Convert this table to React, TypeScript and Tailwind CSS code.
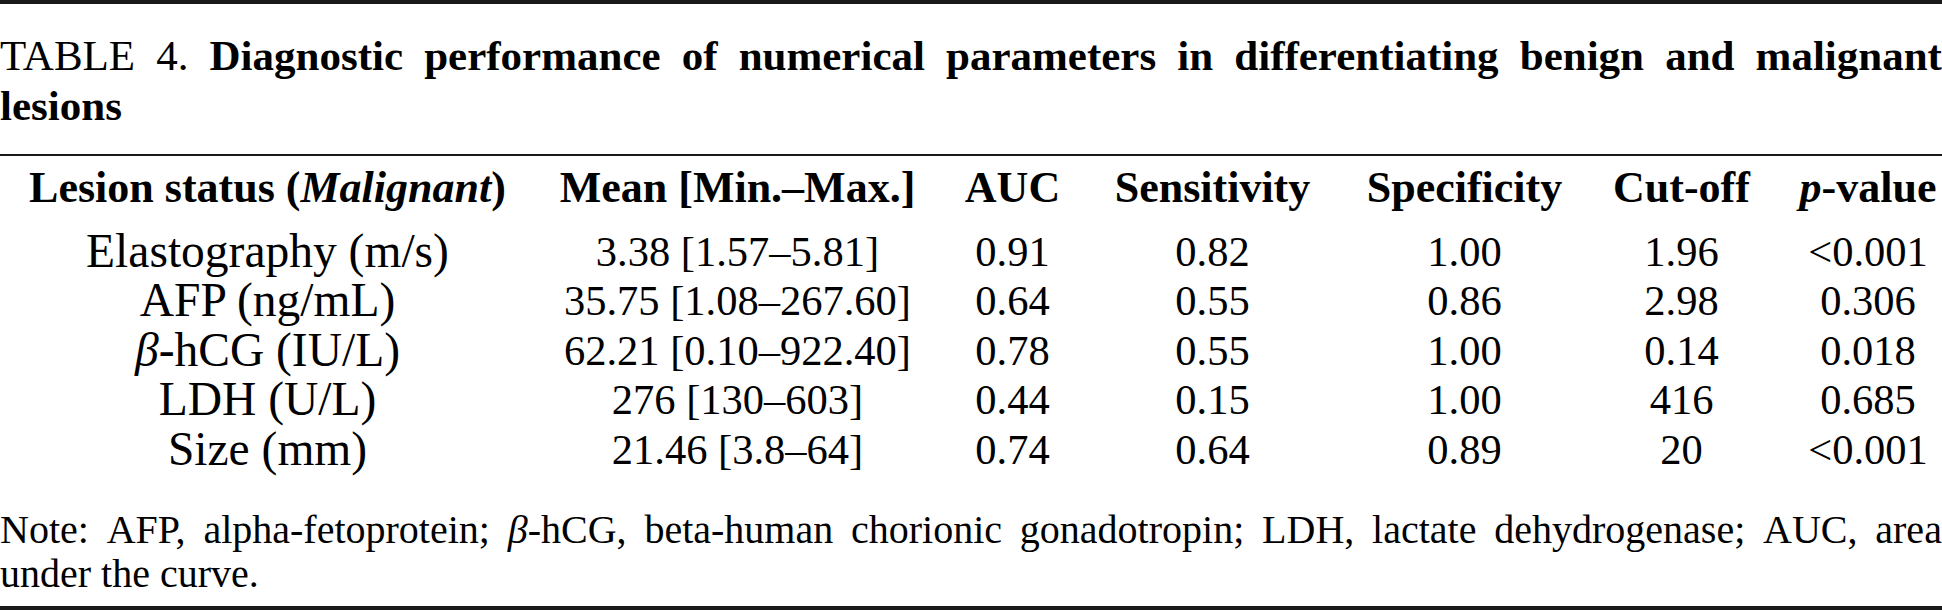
import React from "react";

const serif = { fontFamily: '"Liberation Serif", "Times New Roman", serif' };

const titleWords: { t: React.ReactNode; b: boolean }[] = [
  { t: "TABLE", b: false },
  { t: "4.", b: false },
  { t: "Diagnostic", b: true },
  { t: "performance", b: true },
  { t: "of", b: true },
  { t: "numerical", b: true },
  { t: "parameters", b: true },
  { t: "in", b: true },
  { t: "differentiating", b: true },
  { t: "benign", b: true },
  { t: "and", b: true },
  { t: "malignant", b: true },
];

const noteWords: React.ReactNode[] = [
  "Note:",
  "AFP,",
  "alpha-fetoprotein;",
  <span key="b">
    <i>β</i>-hCG,
  </span>,
  "beta-human",
  "chorionic",
  "gonadotropin;",
  "LDH,",
  "lactate",
  "dehydrogenase;",
  "AUC,",
  "area",
];

const rows: React.ReactNode[][] = [
  ["Elastography (m/s)", "3.38 [1.57–5.81]", "0.91", "0.82", "1.00", "1.96", "<0.001"],
  ["AFP (ng/mL)", "35.75 [1.08–267.60]", "0.64", "0.55", "0.86", "2.98", "0.306"],
  [
    <span key="b">
      <i>β</i>-hCG (IU/L)
    </span>,
    "62.21 [0.10–922.40]",
    "0.78",
    "0.55",
    "1.00",
    "0.14",
    "0.018",
  ],
  ["LDH (U/L)", "276 [130–603]", "0.44", "0.15", "1.00", "416", "0.685"],
  ["Size (mm)", "21.46 [3.8–64]", "0.74", "0.64", "0.89", "20", "<0.001"],
];

const gridCols =
  "grid grid-cols-[535px_405px_145px_255px_249px_185px_168px]";

export default function App() {
  return (
    <div
      className="w-[1942px] h-[610px] bg-white text-black overflow-hidden flex flex-col"
      style={serif}
    >
      <div className="h-[4px] bg-[#1a1a1a]" />
      <div className="mt-[27px] text-[43px] leading-[50px]">
        <div className="flex justify-between whitespace-nowrap">
          {titleWords.map((w, i) => (
            <span key={i} className={w.b ? "font-bold" : ""}>
              {w.t}
            </span>
          ))}
        </div>
        <div className="font-bold">lesions</div>
      </div>
      <div className="mt-[23px] h-[2px] bg-[#1a1a1a]" />
      <div
        className={`${gridCols} mt-[7px] h-[50px] text-[44px] leading-[50px] font-bold text-center whitespace-nowrap`}
      >
        <div>
          Lesion status (<i>Malignant</i>)
        </div>
        <div>Mean [Min.–Max.]</div>
        <div>AUC</div>
        <div>Sensitivity</div>
        <div>Specificity</div>
        <div>Cut-off</div>
        <div className="pl-[20px]">
          <i>p</i>-value
        </div>
      </div>
      <div className="mt-[13.5px] text-center whitespace-nowrap">
        {rows.map((r, i) => (
          <div key={i} className={`${gridCols} h-[49.5px]`}>
            {r.map((c, j) => (
              <div
                key={j}
                className={
                  j === 0
                    ? "text-[47.5px] leading-[48px]"
                    : j === 6
                      ? "pl-[20px] text-[42.5px] leading-[49.5px]"
                      : "text-[42.5px] leading-[49.5px]"
                }
              >
                {c}
              </div>
            ))}
          </div>
        ))}
      </div>
      <div className="mt-[33.5px] text-[40px] leading-[44px]">
        <div className="flex justify-between gap-[8px] whitespace-nowrap">
          {noteWords.map((w, i) => (
            <span key={i}>{w}</span>
          ))}
        </div>
        <div>under the curve.</div>
      </div>
      <div className="mt-[10.5px] h-[4px] bg-[#1a1a1a]" />
    </div>
  );
}
